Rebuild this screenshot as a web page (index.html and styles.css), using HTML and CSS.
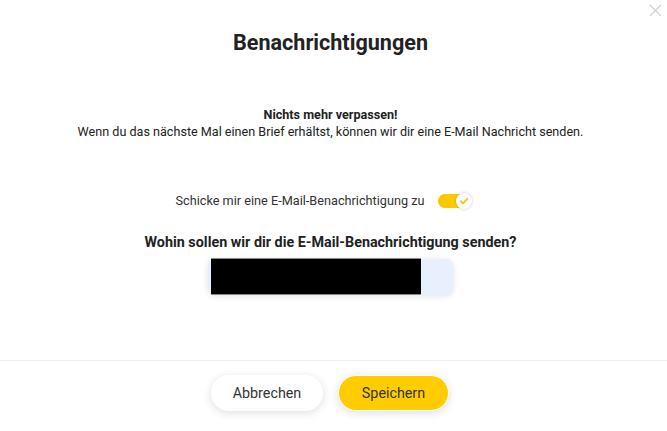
FILE: index.html
```html
<!DOCTYPE html>
<html lang="de">
<head>
<meta charset="utf-8">
<title>Benachrichtigungen</title>
<link rel="stylesheet" href="styles.css">
</head>
<body>
<div class="modal">
  <button class="close" aria-label="Schließen">
    <svg width="13" height="13" viewBox="0 0 13 13"><path d="M1 1L12 12M12 1L1 12" stroke="#cfcfcf" stroke-width="1.2" fill="none"/></svg>
  </button>
  <div class="content">
    <h1 class="title">Benachrichtigungen</h1>
    <p class="lead"><strong>Nichts mehr verpassen!</strong><br>Wenn du das nächste Mal einen Brief erhältst, können wir dir eine E-Mail Nachricht senden.</p>
    <div class="toggle-row">
      <span class="toggle-label">Schicke mir eine E-Mail-Benachrichtigung zu</span>
      <span class="toggle">
        <span class="knob">
          <svg width="10" height="10" viewBox="0 0 10 10"><path d="M1.8 5.2L4 7.3L8.3 2.8" stroke="#f5c400" stroke-width="1.8" fill="none" stroke-linecap="round" stroke-linejoin="round"/></svg>
        </span>
      </span>
    </div>
    <h2 class="question">Wohin sollen wir dir die E-Mail-Benachrichtigung senden?</h2>
    <div class="input-wrap">
      <input class="email" type="text" value="">
      <span class="redact"></span>
    </div>
  </div>
  <div class="footer">
    <button class="btn btn-cancel">Abbrechen</button>
    <button class="btn btn-save">Speichern</button>
  </div>
</div>
</body>
</html>
```
FILE: styles.css
```css
* { box-sizing: border-box; }
html, body { margin: 0; padding: 0; background: #fff; }
body {
  font-family: Roboto, "Liberation Sans", Arial, sans-serif;
  color: #333;
  width: 667px;
  height: 431px;
  overflow: hidden;
}
.modal {
  position: relative;
  height: 431px;
  display: flex;
  flex-direction: column;
}
.close {
  position: absolute;
  top: 4px;
  right: 5px;
  width: 13px;
  height: 13px;
  padding: 0;
  border: 0;
  background: none;
  display: block;
}
.close svg { display: block; }
.content {
  display: flex;
  flex-direction: column;
  align-items: center;
  height: 361px;
  padding-right: 6px;
  border-bottom: 1px solid #efefef;
}
.title {
  margin: 30px 0 0;
  font-size: 21.6px;
  line-height: 26px;
  font-weight: 700;
  color: #222;
}
.lead {
  margin: 50px 0 0;
  font-size: 12.6px;
  line-height: 17px;
  text-align: center;
  color: #222;
}
.lead strong { font-weight: 700; }
.toggle-row {
  margin-top: 53px;
  display: flex;
  align-items: center;
  gap: 14px;
  height: 16px;
  padding-right: 19px;
}
.toggle-label {
  font-size: 12.7px;
  line-height: 16px;
  color: #333;
}
.toggle {
  position: relative;
  width: 28px;
  height: 14px;
  border-radius: 7px;
  background: linear-gradient(90deg, #f7c600, #ffcf00);
  display: block;
}
.knob {
  position: absolute;
  right: -6px;
  top: -1px;
  width: 16px;
  height: 16px;
  border-radius: 50%;
  background: #fff;
  box-shadow: 0 0 3px rgba(0,0,0,0.25);
  display: flex;
  align-items: center;
  justify-content: center;
}
.knob svg { display: block; }
.question {
  margin: 24px 0 0;
  font-size: 14.35px;
  line-height: 20px;
  font-weight: 700;
  color: #222;
}
.input-wrap {
  position: relative;
  margin-top: 6px;
  width: 245px;
  height: 36px;
}
.email {
  display: block;
  width: 100%;
  height: 100%;
  border: 0;
  border-radius: 7px;
  background: #e8f0fe;
  box-shadow: 0 1px 6px rgba(0,0,0,0.12);
  outline: none;
}
.redact {
  position: absolute;
  left: 3px;
  top: -1px;
  width: 210px;
  height: 37px;
  background: #000;
  border-top: 1px solid #8a8a8a;
  border-bottom: 1px solid #8a8a8a;
}
.footer {
  display: flex;
  justify-content: center;
  align-items: flex-start;
  gap: 15px;
  padding-top: 14px;
  padding-right: 7px;
}
.btn {
  height: 36px;
  border-radius: 18px;
  font-family: Roboto, "Liberation Sans", Arial, sans-serif;
  font-size: 14.3px;
  color: #333;
  padding: 0;
  box-shadow: 0 2px 10px rgba(0,0,0,0.13);
}
.btn-cancel {
  width: 112px;
  background: #fff;
  border: 0;
}
.btn-save {
  width: 111px;
  background: #ffcc00;
  border: 1px solid #fff;
}
```
